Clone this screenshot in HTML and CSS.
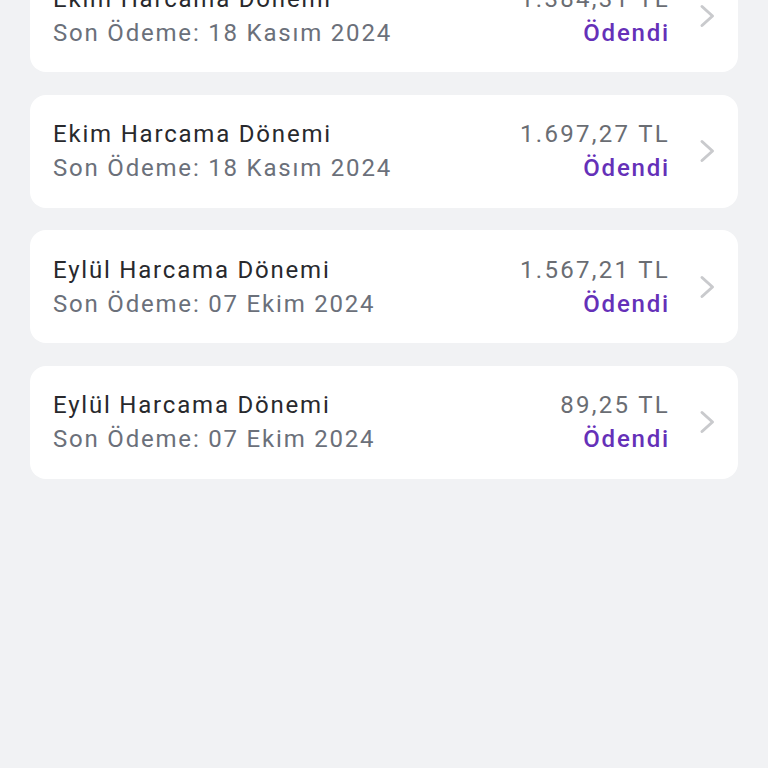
FILE: index.html
```html
<!DOCTYPE html>
<html>
<head>
	<title>Ekstreler</title>
	<meta charset="utf-8">
	<meta name="viewport" content="width=device-width,initial-scale=1">
	<link rel="stylesheet" href="styles.css">
</head>
<body>
	<ul class="statement-list">
		<li class="statement">
			<div class="statement-info">
				<p class="statement-title">Ekim Harcama Dönemi</p>
				<p class="statement-due">Son Ödeme: 18 Kasım 2024</p>
			</div>
			<div class="statement-amount">
				<p class="amount">1.384,31 TL</p>
				<p class="status">Ödendi</p>
			</div>
			<svg class="chevron" width="20" height="24" viewBox="0 0 20 24"><path d="M5 2.5 L15.5 12 L5 21.5" fill="none" stroke="#c9cacd" stroke-width="3" stroke-linecap="round" stroke-linejoin="round"/></svg>
		</li>
		<li class="statement">
			<div class="statement-info">
				<p class="statement-title">Ekim Harcama Dönemi</p>
				<p class="statement-due">Son Ödeme: 18 Kasım 2024</p>
			</div>
			<div class="statement-amount">
				<p class="amount">1.697,27 TL</p>
				<p class="status">Ödendi</p>
			</div>
			<svg class="chevron" width="20" height="24" viewBox="0 0 20 24"><path d="M5 2.5 L15.5 12 L5 21.5" fill="none" stroke="#c9cacd" stroke-width="3" stroke-linecap="round" stroke-linejoin="round"/></svg>
		</li>
		<li class="statement">
			<div class="statement-info">
				<p class="statement-title">Eylül Harcama Dönemi</p>
				<p class="statement-due">Son Ödeme: 07 Ekim 2024</p>
			</div>
			<div class="statement-amount">
				<p class="amount">1.567,21 TL</p>
				<p class="status">Ödendi</p>
			</div>
			<svg class="chevron" width="20" height="24" viewBox="0 0 20 24"><path d="M5 2.5 L15.5 12 L5 21.5" fill="none" stroke="#c9cacd" stroke-width="3" stroke-linecap="round" stroke-linejoin="round"/></svg>
		</li>
		<li class="statement">
			<div class="statement-info">
				<p class="statement-title">Eylül Harcama Dönemi</p>
				<p class="statement-due">Son Ödeme: 07 Ekim 2024</p>
			</div>
			<div class="statement-amount">
				<p class="amount">89,25 TL</p>
				<p class="status">Ödendi</p>
			</div>
			<svg class="chevron" width="20" height="24" viewBox="0 0 20 24"><path d="M5 2.5 L15.5 12 L5 21.5" fill="none" stroke="#c9cacd" stroke-width="3" stroke-linecap="round" stroke-linejoin="round"/></svg>
		</li>
	</ul>
</body>
</html>
```

FILE: styles.css
```css
*{margin: 0;padding: 0;box-sizing: border-box;}
html,body{width: 100%;height: 100%;}
body{background-color: #f1f2f4;font-family: Roboto, "Noto Sans", sans-serif;overflow: hidden;}
ul li{list-style: none;}

.statement-list{display: flex;flex-direction: column;gap: 22.5px;padding: 0 30px;margin-top: -41px;}
.statement{display: flex;align-items: center;height: 113px;padding: 0 21px 0 23px;background-color: #fff;border-radius: 16px;}
.statement-info{flex: 1;}
.statement-info p,.statement-amount p{font-size: 24px;line-height: 34px;letter-spacing: 1.8px;}
.statement-title{color: #28292d;}
.statement-due{color: #6b707a;}
.statement-amount{text-align: right;margin-right: -2px;}
.statement-amount .amount{color: #6a6d73;letter-spacing: 2.3px;}
.status{color: #6530b8;font-weight: 500;}
.chevron{margin-left: 29px;flex-shrink: 0;}
```
